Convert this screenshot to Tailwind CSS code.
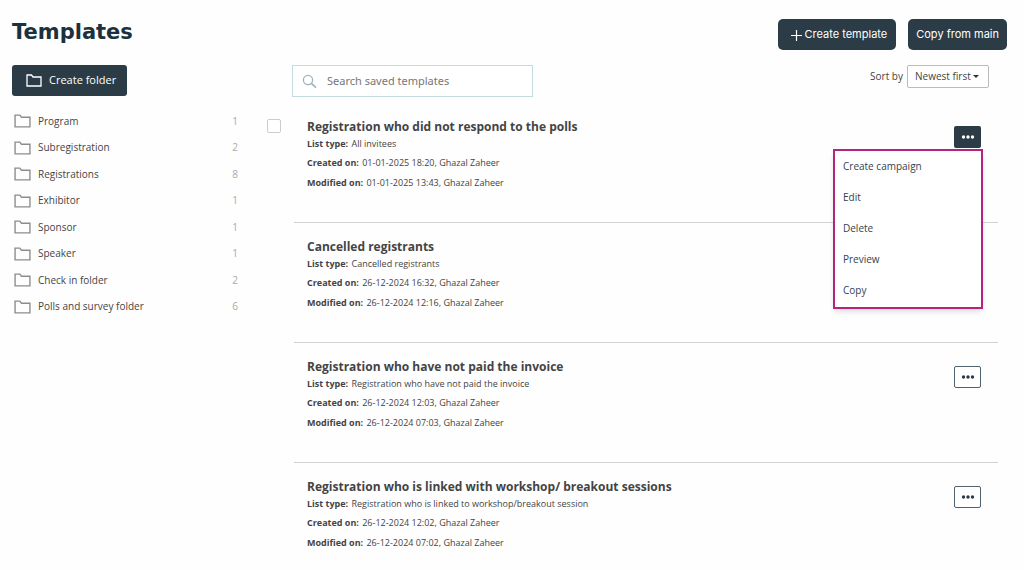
<!DOCTYPE html>
<html lang="en">
<head>
  <meta charset="UTF-8">
  <meta name="viewport" content="width=device-width, initial-scale=1.0">
  <title>Templates</title>
  <script src="https://cdn.jsdelivr.net/npm/@tailwindcss/browser@4"></script>
</head>
<body class="bg-[#fefefe] font-['Open_Sans',sans-serif] text-[10px] text-[#444]">
  <svg class="hidden">
    <symbol id="folder" viewBox="0 0 16 13">
      <path d="M1 12V1h4.500l1.500 2h8v9z" fill="none" stroke="currentColor" stroke-width="1.300"/>
    </symbol>
    <symbol id="dots" viewBox="0 0 14 4">
      <circle cx="2.500" cy="2" r="1.700"/><circle cx="7" cy="2" r="1.700"/><circle cx="11.500" cy="2" r="1.700"/>
    </symbol>
  </svg>

  <header class="flex items-start justify-between pt-[19px] pl-3 pr-[17px]">
    <h1 class="font-['DejaVu_Sans',sans-serif] text-[21px] leading-[26px] font-bold text-[#1b313d]">Templates</h1>
    <div class="flex gap-3 font-['Inter',sans-serif] text-[11px] text-white">
      <button class="flex h-[31px] items-center gap-[3px] rounded-[5px] bg-[#2b3c46] pl-3 pr-[9px]">
        <svg class="size-3" viewBox="0 0 12 12" fill="none" stroke="currentColor" stroke-width="1.200"><path d="M6.500 1v11M1 6.500h11"/></svg>
        Create template
      </button>
      <button class="h-[31px] rounded-[5px] bg-[#2b3c46] px-2">Copy from main</button>
    </div>
  </header>

  <div class="flex items-start pt-[15px]">
    <aside class="w-[267px] shrink-0 pl-3 pr-[29px]">
      <button class="flex h-[31px] items-center gap-[7px] rounded-[3px] bg-[#2b3c46] pl-[14px] pr-[11px] text-[11px] text-white">
        <svg class="h-[13px] w-4"><use href="#folder"/></svg>
        Create folder
      </button>
      <ul class="mt-3 grid h-[212px] grid-rows-8 pl-[2px]">
        <li class="flex items-center gap-[7px]"><svg class="h-[14px] w-[17px] text-[#8c8c8c]"><use href="#folder"/></svg><a href="#">Program</a><span class="ml-auto text-[#aaa]">1</span></li>
        <li class="flex items-center gap-[7px]"><svg class="h-[14px] w-[17px] text-[#8c8c8c]"><use href="#folder"/></svg><a href="#">Subregistration</a><span class="ml-auto text-[#aaa]">2</span></li>
        <li class="flex items-center gap-[7px]"><svg class="h-[14px] w-[17px] text-[#8c8c8c]"><use href="#folder"/></svg><a href="#">Registrations</a><span class="ml-auto text-[#aaa]">8</span></li>
        <li class="flex items-center gap-[7px]"><svg class="h-[14px] w-[17px] text-[#8c8c8c]"><use href="#folder"/></svg><a href="#">Exhibitor</a><span class="ml-auto text-[#aaa]">1</span></li>
        <li class="flex items-center gap-[7px]"><svg class="h-[14px] w-[17px] text-[#8c8c8c]"><use href="#folder"/></svg><a href="#">Sponsor</a><span class="ml-auto text-[#aaa]">1</span></li>
        <li class="flex items-center gap-[7px]"><svg class="h-[14px] w-[17px] text-[#8c8c8c]"><use href="#folder"/></svg><a href="#">Speaker</a><span class="ml-auto text-[#aaa]">1</span></li>
        <li class="flex items-center gap-[7px]"><svg class="h-[14px] w-[17px] text-[#8c8c8c]"><use href="#folder"/></svg><a href="#">Check in folder</a><span class="ml-auto text-[#aaa]">2</span></li>
        <li class="flex items-center gap-[7px]"><svg class="h-[14px] w-[17px] text-[#8c8c8c]"><use href="#folder"/></svg><a href="#">Polls and survey folder</a><span class="ml-auto text-[#aaa]">6</span></li>
      </ul>
    </aside>

    <main class="min-w-0 flex-1 pr-[26px]">
      <div class="flex items-start justify-between pl-[25px] pr-[9px]">
        <label class="flex h-8 w-[241px] items-center gap-[10px] border border-[#c3dade] bg-white px-[9px]">
          <svg class="size-[15px] shrink-0" viewBox="0 0 15 15" fill="none" stroke="#9db4bd"><circle cx="6" cy="6" r="4.600" stroke-width="1.300"/><path d="M9.400 9.400l4.600 4.300" stroke-width="1.600"/></svg>
          <input type="search" aria-label="Search saved templates" placeholder="Search saved templates" class="w-full min-w-0 font-['Noto_Sans',sans-serif] text-[11px] outline-none placeholder:text-[#777]">
        </label>
        <div class="flex items-center gap-1">
          <label for="sort">Sort by</label>
          <div class="relative">
            <select id="sort" class="h-[23px] w-[82px] appearance-none rounded-[2px] border border-[#bbb] bg-white pl-[7px] text-[10px]">
              <option>Newest first</option>
              <option>Oldest first</option>
            </select>
            <svg class="pointer-events-none absolute top-[10px] right-[10px] h-[3px] w-[6px]" viewBox="0 0 6 3" fill="#333"><path d="M0 0h6L3 3z"/></svg>
          </div>
        </div>
      </div>

      <div class="mt-[6px] flex items-start gap-[13px]">
        <input type="checkbox" aria-label="Select template" class="mt-4 size-[14px] shrink-0 appearance-none rounded-[2px] border border-[#ccc] bg-white">
        <div class="min-w-0 flex-1 [&_b]:mr-px">
          <article class="relative flex items-start justify-between border-b border-[#d2d2d2] pt-[15px] pr-[17px] pb-[29px] pl-[13px] text-[9px] leading-5">
            <div>
              <h2 class="text-xs leading-[18px] font-bold">Registration who did not respond to the polls</h2>
              <p class="mb-px leading-4"><b>List type:</b> All invitees</p>
              <p><b>Created on:</b> 01-01-2025 18:20, Ghazal Zaheer</p>
              <p><b>Modified on:</b> 01-01-2025 13:43, Ghazal Zaheer</p>
            </div>
            <button aria-label="Template actions" class="mt-2 flex h-[22px] w-[27px] items-center justify-center rounded-[2px] bg-[#2b3c46] text-white"><svg class="h-1 w-[14px] fill-current"><use href="#dots"/></svg></button>
            <div class="absolute top-[46px] right-[15px] z-10 flex w-[150px] flex-col border-2 border-[#b5247c] bg-white pb-[1px] text-[10px] leading-[31px] text-[#34434f] shadow-md">
              <button class="px-2 text-left">Create campaign</button>
              <button class="px-2 text-left">Edit</button>
              <button class="px-2 text-left">Delete</button>
              <button class="px-2 text-left">Preview</button>
              <button class="px-2 text-left">Copy</button>
            </div>
          </article>

          <article class="border-b border-[#d2d2d2] pt-[15px] pr-[17px] pb-[29px] pl-[13px] text-[9px] leading-5">
            <h2 class="text-xs leading-[18px] font-bold">Cancelled registrants</h2>
            <p class="mb-px leading-4"><b>List type:</b> Cancelled registrants</p>
            <p><b>Created on:</b> 26-12-2024 16:32, Ghazal Zaheer</p>
            <p><b>Modified on:</b> 26-12-2024 12:16, Ghazal Zaheer</p>
          </article>

          <article class="flex items-start justify-between border-b border-[#d2d2d2] pt-[15px] pr-[17px] pb-[29px] pl-[13px] text-[9px] leading-5">
            <div>
              <h2 class="text-xs leading-[18px] font-bold">Registration who have not paid the invoice</h2>
              <p class="mb-px leading-4"><b>List type:</b> Registration who have not paid the invoice</p>
              <p><b>Created on:</b> 26-12-2024 12:03, Ghazal Zaheer</p>
              <p><b>Modified on:</b> 26-12-2024 07:03, Ghazal Zaheer</p>
            </div>
            <button aria-label="Template actions" class="mt-2 flex h-[22px] w-[27px] items-center justify-center rounded-[2px] border border-[#4f6270] bg-white text-[#2b3c46]"><svg class="h-1 w-[14px] fill-current"><use href="#dots"/></svg></button>
          </article>

          <article class="flex items-start justify-between pt-[15px] pr-[17px] pl-[13px] text-[9px] leading-5">
            <div>
              <h2 class="text-xs leading-[18px] font-bold">Registration who is linked with workshop/ breakout sessions</h2>
              <p class="mb-px leading-4"><b>List type:</b> Registration who is linked to workshop/breakout session</p>
              <p><b>Created on:</b> 26-12-2024 12:02, Ghazal Zaheer</p>
              <p><b>Modified on:</b> 26-12-2024 07:02, Ghazal Zaheer</p>
            </div>
            <button aria-label="Template actions" class="mt-2 flex h-[22px] w-[27px] items-center justify-center rounded-[2px] border border-[#4f6270] bg-white text-[#2b3c46]"><svg class="h-1 w-[14px] fill-current"><use href="#dots"/></svg></button>
          </article>
        </div>
      </div>
    </main>
  </div>
</body>
</html>
